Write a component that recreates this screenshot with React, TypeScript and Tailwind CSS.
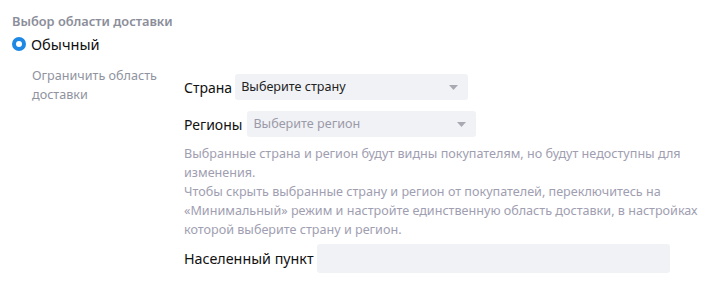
import React from "react";

function Caret() {
  return (
    <svg width="9" height="5" viewBox="0 0 9 5" className="shrink-0">
      <path d="M0 0 L9 0 L4.5 5 Z" fill="#a9a9b4" />
    </svg>
  );
}

export default function App() {
  return (
    <div
      className="w-[715px] h-[288px] bg-white text-[#1a1a1a] overflow-hidden"
      style={{ fontFamily: '"Noto Sans", "Open Sans", sans-serif' }}
    >
      <div className="pl-[12px] pt-[11px]">
        <div className="text-[12.8px] font-semibold text-[#8b8e9a] leading-[20px]">
          Выбор области доставки
        </div>
        <div className="flex items-center gap-[5px] mt-[3px] h-[20px]">
          <span className="w-[14px] h-[14px] rounded-full bg-[#1e88e5] flex items-center justify-center">
            <span className="w-[6px] h-[6px] rounded-full bg-white" />
          </span>
          <span className="text-[14.6px] leading-[20px] text-[#111]">Обычный</span>
        </div>
        <div className="flex mt-[12px]">
          <div className="w-[172px] pl-[20px] text-[12.6px] leading-[19px] text-[#8f93a0]">
            Ограничить область
            <br />
            доставки
          </div>
          <div className="flex flex-col pt-[8px]">
            <div className="flex items-center gap-[3px]">
              <span className="text-[14px] text-[#111]">Страна</span>
              <div className="w-[233px] h-[26px] rounded-[3px] bg-[#f1f2f6] flex items-center justify-between pl-[6px] pr-[10px]">
                <span className="text-[12.6px] text-[#222]">Выберите страну</span>
                <Caret />
              </div>
            </div>
            <div className="flex items-center gap-[5px] mt-[11px]">
              <span className="text-[14px] text-[#111]">Регионы</span>
              <div className="w-[229px] h-[26px] rounded-[3px] bg-[#f1f2f6] flex items-center justify-between pl-[6px] pr-[10px]">
                <span className="text-[12.6px] text-[#9b9aa8]">Выберите регион</span>
                <Caret />
              </div>
            </div>
            <div className="mt-[7px] w-[520px] text-[12.6px] leading-[19px] text-[#a09eb1]">
              Выбранные страна и регион будут видны покупателям, но будут недоступны для изменения.
              <br />
              Чтобы скрыть выбранные страну и регион от покупателей, переключитесь на «Минимальный» режим и настройте единственную область доставки, в настройках которой выберите страну и регион.
            </div>
            <div className="flex items-center gap-[3px] mt-[5px]">
              <span className="text-[14.3px] text-[#111]">Населенный пункт</span>
              <div className="w-[353px] h-[29px] rounded-[3px] bg-[#f1f2f6]" />
            </div>
          </div>
        </div>
      </div>
    </div>
  );
}
